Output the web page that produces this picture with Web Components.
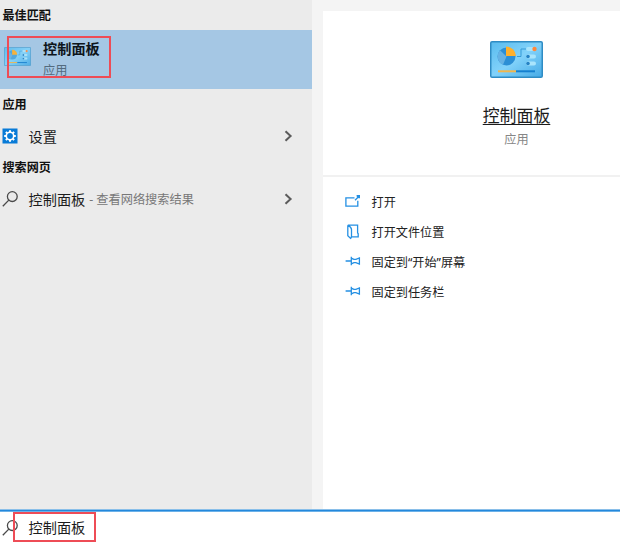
<!DOCTYPE html>
<html lang="zh-CN">
<head>
<meta charset="utf-8">
<title>控制面板</title>
<style>
html,body{margin:0;height:100%;overflow:hidden}
body{font-family:"Noto Sans","Noto Sans CJK SC",sans-serif;color:#1c1c1c;background:#fff}
</style>
</head>
<body>
<search-window>
  <result-list slot="list">
    <group-title style="--h:30px">最佳匹配</group-title>
    <best-match><panel-icon slot="icon"></panel-icon>控制面板<span slot="kind">应用</span></best-match>
    <group-title style="--h:30px">应用</group-title>
    <result-row><line-icon slot="icon" name="gear"></line-icon>设置</result-row>
    <group-title style="--h:29px">搜索网页</group-title>
    <result-row><line-icon slot="icon" name="search"></line-icon>控制面板<span slot="note">- 查看网络搜索结果</span></result-row>
  </result-list>
  <detail-pane slot="detail">
    <panel-icon slot="icon"></panel-icon>
    <span slot="title">控制面板</span>
    <span slot="kind">应用</span>
    <action-item><line-icon slot="icon" name="open"></line-icon>打开</action-item>
    <action-item><line-icon slot="icon" name="folder"></line-icon>打开文件位置</action-item>
    <action-item><line-icon slot="icon" name="pin"></line-icon>固定到“开始”屏幕</action-item>
    <action-item><line-icon slot="icon" name="pin"></line-icon>固定到任务栏</action-item>
  </detail-pane>
  <search-box slot="bar"><line-icon slot="icon" name="search"></line-icon>控制面板</search-box>
</search-window>
<script>
const define = (name, html) => customElements.define(name, class extends HTMLElement {
  constructor() {
    super();
    this.attachShadow({mode: 'open'}).innerHTML = html;
  }
});

define('search-window', `<style>
:host{display:flex;flex-direction:column;width:620px;height:542px;overflow:hidden}
.main{display:grid;grid-template-columns:312px 1fr;height:509px;flex:none}
</style><div class="main"><slot name="list"></slot><slot name="detail"></slot></div><slot name="bar"></slot>`);

define('result-list', `<style>
:host{display:flex;flex-direction:column;background:#ebebeb;min-width:0}
</style><slot></slot>`);

define('group-title', `<style>
:host{display:block;box-sizing:border-box;height:var(--h);line-height:calc(var(--h) - 1px);padding:1px 0 0 2.5px;font-size:12.1px;font-weight:700;color:#111}
</style><slot></slot>`);

define('best-match', `<style>
:host{display:flex;position:relative;height:59px;background:#a5c7e4;padding-left:4px;gap:12px;align-items:center;box-sizing:border-box}
::slotted(panel-icon){width:27px;height:19px;margin-top:-7px;--edge:#4a9bcb;--pie:#4ba5de;opacity:.9}
.text{display:flex;flex-direction:column}
.name{font-size:14.2px;line-height:20px;font-weight:700;color:#0e151b}
.kind{font-size:12.2px;line-height:20px;margin-top:2px;color:#536b7e}
.mark{position:absolute;left:7px;top:6px;width:104px;height:42px;box-sizing:border-box;border:2px solid #ee4c56}
</style><slot name="icon"></slot><div class="text"><div class="name"><slot></slot></div><div class="kind"><slot name="kind"></slot></div></div><div class="mark"></div>`);

define('result-row', `<style>
:host{display:flex;align-items:center;height:34px;padding:0 19px 0 2px;font-size:14.2px;line-height:20px}
::slotted(line-icon){margin-right:10.5px}
::slotted(span){font-size:12.2px;color:#777;margin-left:4px}
.label{padding-top:1px;display:flex;align-items:center}
svg{margin-left:auto;display:block}
</style><slot name="icon"></slot><div class="label"><slot></slot><slot name="note"></slot></div>
<svg width="9" height="12" viewBox="0 0 9 12"><path d="M1.5 1.2L6.6 6 1.5 10.8" fill="none" stroke="#5b5b5b" stroke-width="2"/></svg>`);

define('detail-pane', `<style>
:host{display:flex;flex-direction:column;background:#f4f4f4;padding:11px 0 0 11px;box-sizing:border-box;min-width:0}
.head{display:flex;flex-direction:column;align-items:center;height:166px;background:#fff;border-bottom:2px solid #f1f1f1;padding:30px 0 0;box-sizing:border-box;width:387px}
.head ::slotted(panel-icon){width:53px;height:37px}
.title{font-size:16.9px;line-height:24px;margin-top:26px;text-decoration:underline;text-decoration-thickness:1px;text-underline-offset:2px}
.kind{font-size:12.2px;line-height:18px;margin-top:3px;color:#868686}
.wrap{overflow:hidden}
.actions{flex:1;background:#fff;padding:10px 0 0 22px;display:flex;flex-direction:column}
</style><div class="wrap"><div class="head"><slot name="icon"></slot><div class="title"><slot name="title"></slot></div><div class="kind"><slot name="kind"></slot></div></div></div>
<div class="actions"><slot></slot></div>`);

define('action-item', `<style>
:host{display:flex;align-items:center;gap:10.5px;height:30px;font-size:12.15px;line-height:20px;color:#222}
span{padding-top:2px}
</style><slot name="icon"></slot><span><slot></slot></span>`);

define('search-box', `<style>
:host{display:flex;position:relative;align-items:center;height:33px;box-sizing:border-box;padding:5px 0 0 2px;gap:10.5px;font-size:14.2px;line-height:20px;background:linear-gradient(#8abfe9 0 1px,#2388dc 1px 2px,#6cb1e8 2px 3px,#fff 3px)}
.mark{position:absolute;left:13px;top:3px;width:83px;height:30px;box-sizing:border-box;border:2px solid #ee4c56}
</style><slot name="icon"></slot><slot></slot><div class="mark"></div>`);

define('panel-icon', `<style>
:host{display:block;flex:none}
svg{display:block;width:100%;height:100%}
</style><svg viewBox="0 0 53 37" preserveAspectRatio="none">
<defs><linearGradient id="g" x1="0" y1="0" x2="1" y2="1"><stop offset="0" stop-color="#58bbee"/><stop offset=".5" stop-color="#82d2fa"/><stop offset="1" stop-color="#45aae6"/></linearGradient></defs>
<rect x=".75" y=".75" width="51.5" height="35.5" rx="1.3" fill="url(#g)" stroke="var(--edge,#2f8cc4)" stroke-width="1.5"/>
<circle cx="16.5" cy="15.5" r="9" fill="var(--pie,#2c8fd5)"/><path d="M16.5 15.5L10 9.3A9 9 0 0 0 13 23.8Z" fill="#66b2e4"/>
<path d="M16 15V5.5A10 10 0 0 1 26 15Z" fill="#ffb02b"/>
<path d="M27 15.5h4V8h6" fill="none" stroke="#369bd7"/>
<g fill="#a9e4fc"><rect x="36" y="6" width="10" height="4" rx="2"/><rect x="36" y="13.5" width="10" height="4" rx="2"/><rect x="36" y="20.5" width="10" height="4" rx="2"/></g>
<circle cx="44.5" cy="8" r="2.2" fill="#ff873c"/><circle cx="38" cy="15.5" r="1.8" fill="#2582c5"/><circle cx="38" cy="22.5" r="1.8" fill="#2582c5"/>
<path d="M8 30.3h18" stroke="#f0b64d" stroke-width="2"/><path d="M26 30.3h19" stroke="#1580cf" stroke-width="2"/>
</svg>`);

const glyphs = {
  search: '<g fill="none" stroke="#4a4a4a" stroke-width="1.3"><circle cx="10.3" cy="5.6" r="4.9"/><path d="M6.8 9.1L.8 15.2"/></g>',
  gear: '<rect x=".5" y=".5" width="15" height="15" fill="#087bd7"/><g fill="none" stroke="#fff"><circle cx="8" cy="8" r="3.7" stroke-width="1.6"/><path d="M8 2.2v1.8M8 12v1.8M2.2 8H4M12 8h1.8M3.9 3.9l1.3 1.3M10.8 10.8l1.3 1.3M3.9 12.1l1.3-1.3M10.8 5.2l1.3-1.3" stroke-width="2"/></g>',
  open: '<g fill="none" stroke="#2590e3" stroke-width="1.3"><path d="M9.5 3.8H.9v8.4h11.9V6.8M10 6.2l4-4"/></g><path d="M11.6.9H15v3.4h-1.5L11.6 2.6Z" fill="#2590e3"/>',
  folder: '<g fill="none" stroke="#2590e3" stroke-width="1.3"><path d="M2.8 1.2h9.8v7.6l.6 1v3.1H6.2M2.8 1.2v10.6l2.8 2.6c1-.9.9-1.7.9-2.6V5.5c0-1.8-1.4-3-3.5-4.1"/></g>',
  pin: '<g fill="none" stroke="#2590e3" stroke-width="1.3"><path d="M.6 7H6.3M6.3 2.8v8.4M6.3 4.2l2.6 1.2h2l3.5-1.5v6.2l-3.5-1.5h-2L6.3 9.8"/></g>'
};
customElements.define('line-icon', class extends HTMLElement {
  connectedCallback() {
    if (this.shadowRoot) return;
    this.attachShadow({mode: 'open'}).innerHTML = `<style>:host{display:block;flex:none;width:16px;height:16px}svg{display:block}</style>
<svg width="16" height="16" viewBox="0 0 16 16">${glyphs[this.getAttribute('name')]}</svg>`;
  }
});
</script>
</body>
</html>
